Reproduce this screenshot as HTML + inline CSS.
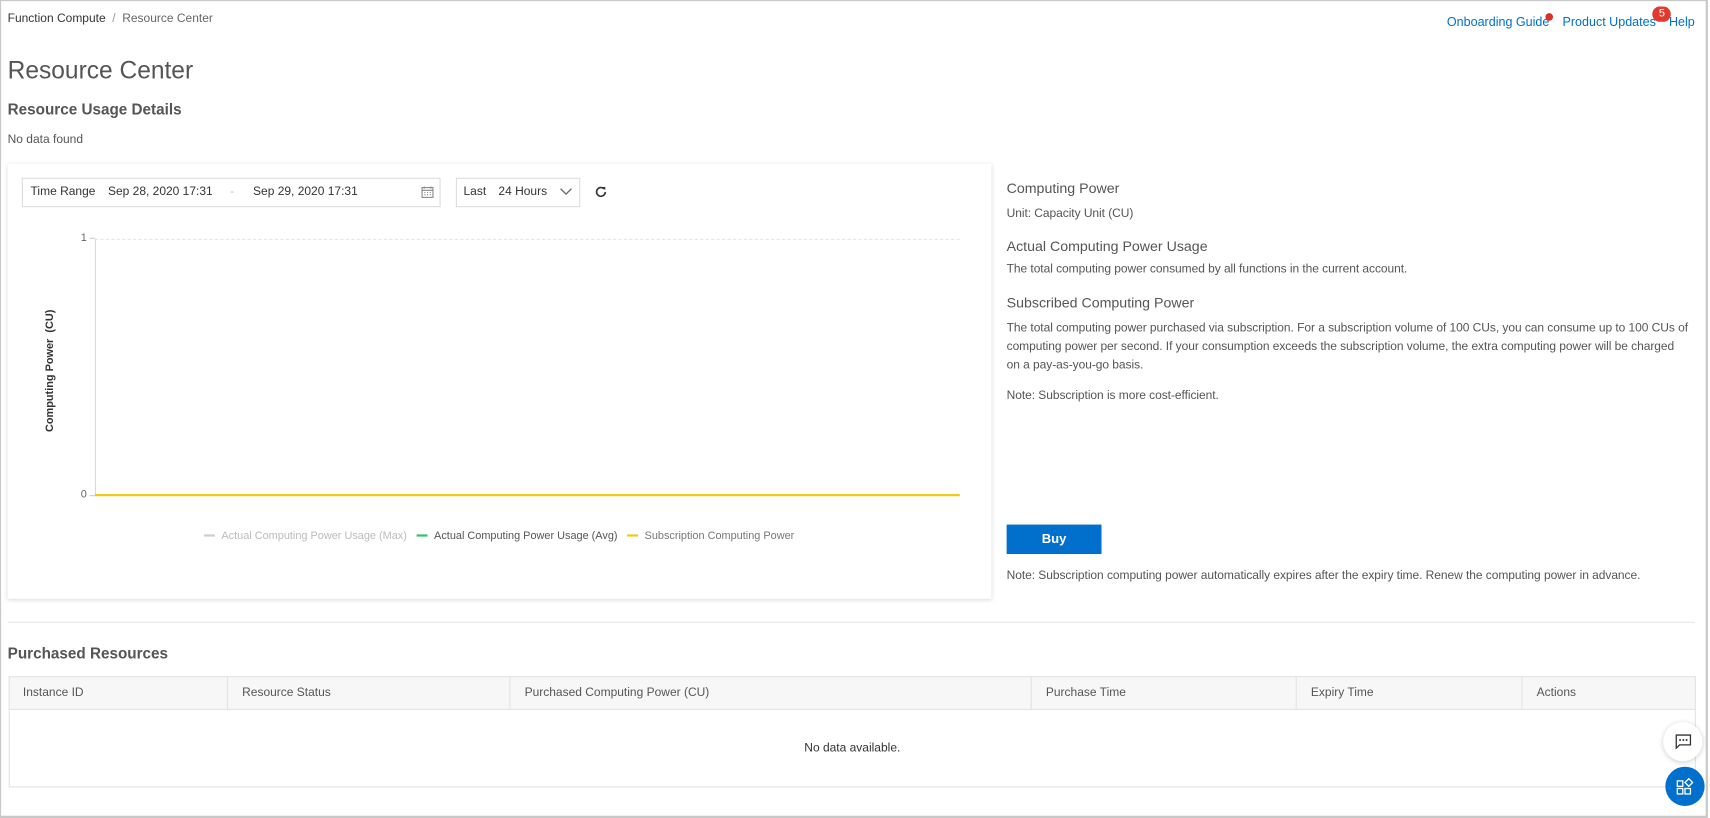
<!DOCTYPE html>
<html><head><meta charset="utf-8"><style>
*{box-sizing:border-box;margin:0;padding:0}
body{width:1710px;height:818px;overflow:hidden;background:#fff;font-family:"Liberation Sans",sans-serif;color:#333;position:relative}
#w{position:absolute;left:0;top:0;width:1568px;height:750px;transform:scale(1.0906);transform-origin:0 0}
.frame{position:absolute;left:0;top:0;width:1566px;height:750px;border:1px solid #c8c8c8;border-right:2px solid #c8c8c8;border-bottom:2px solid #c8c8c8}
.a{position:absolute;white-space:nowrap}
.sm{font-size:11px;color:#555;letter-spacing:-0.05px}
.h{font-size:13px;color:#555}
.link{color:#0070cc;font-size:11.5px;position:relative}
.th{position:absolute;top:620px;height:31px;border-right:1px solid #e3e3e3;font-size:11px;color:#555;line-height:31px;padding-left:13px}
</style></head><body><div id="w">
<div class="frame"></div>
<div class="a" style="left:7px;top:11px;font-size:11px;color:#333">Function Compute <span style="color:#999;margin:0 3px">/</span> <span style="color:#666">Resource Center</span></div>
<div class="a" style="right:14px;top:15px;display:flex;gap:12px">
 <span class="link">Onboarding Guide<span style="position:absolute;right:-3px;top:-3px;width:7px;height:7px;border-radius:50%;background:#d93026"></span></span>
 <span class="link">Product Updates<span style="position:absolute;right:-14px;top:-9px;width:17px;height:14px;border-radius:7px;background:#e0392e;color:#fff;font-size:10px;text-align:center;line-height:14px">5</span></span>
 <span class="link">Help</span>
</div>
<div class="a" style="left:7px;top:52px;font-size:22.5px;color:#555">Resource Center</div>
<div class="a" style="left:7px;top:92px;font-size:14px;font-weight:bold;color:#555">Resource Usage Details</div>
<div class="a" style="left:7px;top:122px;font-size:11px;color:#555">No data found</div>

<div class="a" style="left:7px;top:150px;width:902px;height:399px;box-shadow:0 1px 4px rgba(0,0,0,.15);background:#fff"></div>
<div class="a" style="left:20px;top:163px;width:384px;height:27px;border:1px solid #ddd;font-size:11px;color:#333;line-height:25px">
 <span class="a" style="left:7px">Time Range</span><span class="a" style="left:78px">Sep 28, 2020 17:31</span><span class="a" style="left:190px;color:#bbb">-</span><span class="a" style="left:211px">Sep 29, 2020 17:31</span>
 <svg class="a" style="left:365px;top:6px" width="12" height="12" viewBox="0 0 12 12"><rect x="1" y="2" width="10" height="9" fill="none" stroke="#888"/><path d="M1 4.5h10M3 1v2M9 1v2" stroke="#888"/><path d="M3 6.5h1M5.5 6.5h1M8 6.5h1M3 8.5h1M5.5 8.5h1M8 8.5h1" stroke="#888"/></svg>
</div>
<div class="a" style="left:418px;top:163px;width:114px;height:27px;border:1px solid #ddd;font-size:11px;line-height:25px">
 <span class="a" style="left:6px">Last</span><span class="a" style="left:38px">24 Hours</span>
 <svg class="a" style="left:94px;top:8px" width="12" height="8" viewBox="0 0 12 8"><path d="M1 1l5 5 5-5" fill="none" stroke="#666" stroke-width="1.2"/></svg>
</div>
<svg class="a" style="left:545px;top:170px" width="12" height="12" viewBox="0 0 12 12"><path d="M10 6a4 4 0 1 1-1.2-2.9" fill="none" stroke="#333" stroke-width="1.5"/><path d="M7 1.5h3v3z" fill="#333"/></svg>

<div class="a" style="left:87px;top:219px;width:793px;border-top:1px dashed #e3e3e3"></div>
<div class="a" style="left:87px;top:219px;width:1px;height:236px;background:#cfdbe8"></div>
<div class="a" style="left:87px;top:453px;width:793px;height:2px;background:#f2c811"></div>
<div class="a" style="left:74px;top:213px;font-size:10px;color:#666">1</div>
<div class="a" style="left:74px;top:448px;font-size:10px;color:#666">0</div>
<div class="a" style="left:82px;top:218px;width:5px;height:1px;background:#ccc"></div>
<div class="a" style="left:82px;top:454px;width:5px;height:1px;background:#ccc"></div>
<div class="a" style="left:46px;top:340px;font-size:10px;font-weight:bold;color:#333;transform:translate(-50%,-50%) rotate(-90deg)">Computing Power &nbsp;(CU)</div>
<div class="a" style="left:187px;top:486px;font-size:10px;color:#bbb"><span style="display:inline-block;width:10px;height:2px;background:#ccc;vertical-align:middle;margin-right:6px"></span>Actual Computing Power Usage (Max)</div>
<div class="a" style="left:382px;top:486px;font-size:10px;color:#555"><span style="display:inline-block;width:10px;height:2px;background:#2ec36c;vertical-align:middle;margin-right:6px"></span>Actual Computing Power Usage (Avg)</div>
<div class="a" style="left:575px;top:486px;font-size:10px;color:#777"><span style="display:inline-block;width:10px;height:2px;background:#f2c811;vertical-align:middle;margin-right:6px"></span>Subscription Computing Power</div>

<div class="a h" style="left:923px;top:165px">Computing Power</div>
<div class="a sm" style="left:923px;top:190px">Unit: Capacity Unit (CU)</div>
<div class="a h" style="left:923px;top:218px">Actual Computing Power Usage</div>
<div class="a sm" style="left:923px;top:241px">The total computing power consumed by all functions in the current account.</div>
<div class="a h" style="left:923px;top:270px">Subscribed Computing Power</div>
<div class="a sm" style="left:923px;top:293px;line-height:17px">The total computing power purchased via subscription. For a subscription volume of 100 CUs, you can consume up to 100 CUs of<br>computing power per second. If your consumption exceeds the subscription volume, the extra computing power will be charged<br>on a pay-as-you-go basis.</div>
<div class="a sm" style="left:923px;top:357px">Note: Subscription is more cost-efficient.</div>
<div class="a" style="left:923px;top:481px;width:87px;height:27px;background:#0070cc;color:#fff;font-size:12px;font-weight:bold;text-align:center;line-height:27px">Buy</div>
<div class="a sm" style="left:923px;top:522px">Note: Subscription computing power automatically expires after the expiry time. Renew the computing power in advance.</div>

<div class="a" style="left:7px;top:570px;width:1547px;height:1px;background:#e5e5e5"></div>
<div class="a" style="left:7px;top:591px;font-size:14px;font-weight:bold;color:#555">Purchased Resources</div>
<div class="a" style="left:8px;top:620px;width:1547px;height:102px;border:1px solid #e3e3e3"></div>
<div class="a" style="left:8px;top:620px;width:1547px;height:31px;background:#f7f7f7;border:1px solid #e3e3e3"></div>
<div class="th" style="left:8px;width:201px">Instance ID</div>
<div class="th" style="left:209px;width:259px">Resource Status</div>
<div class="th" style="left:468px;width:478px">Purchased Computing Power (CU)</div>
<div class="th" style="left:946px;width:243px">Purchase Time</div>
<div class="th" style="left:1189px;width:207px">Expiry Time</div>
<div class="th" style="left:1396px;width:158px;border:none">Actions</div>
<div class="a" style="left:8px;top:680px;width:1547px;text-align:center;font-size:11px;color:#333">No data available.</div>

<div class="a" style="left:1525px;top:662px;width:36px;height:36px;border-radius:50%;background:#fff;box-shadow:0 1px 5px rgba(0,0,0,.2)"></div>
<svg class="a" style="left:1536px;top:673px" width="15" height="14" viewBox="0 0 15 14"><path d="M1 1h13v9H4l-3 3z" fill="none" stroke="#333" stroke-width="1.2"/><circle cx="4.5" cy="5.5" r=".9" fill="#333"/><circle cx="7.5" cy="5.5" r=".9" fill="#333"/><circle cx="10.5" cy="5.5" r=".9" fill="#333"/></svg>
<div class="a" style="left:1527px;top:703px;width:36px;height:36px;border-radius:50%;background:#0070cc"></div>
<svg class="a" style="left:1537px;top:713px" width="17" height="17" viewBox="0 0 17 17"><g fill="none" stroke="#fff" stroke-width="1.2"><rect x="1" y="3" width="5" height="5"/><rect x="1" y="10" width="5" height="5"/><rect x="8" y="10" width="5" height="5"/><path d="M11.5 1l3.5 3.5-3.5 3.5-3.5-3.5z"/></g></svg>
</div></body></html>
